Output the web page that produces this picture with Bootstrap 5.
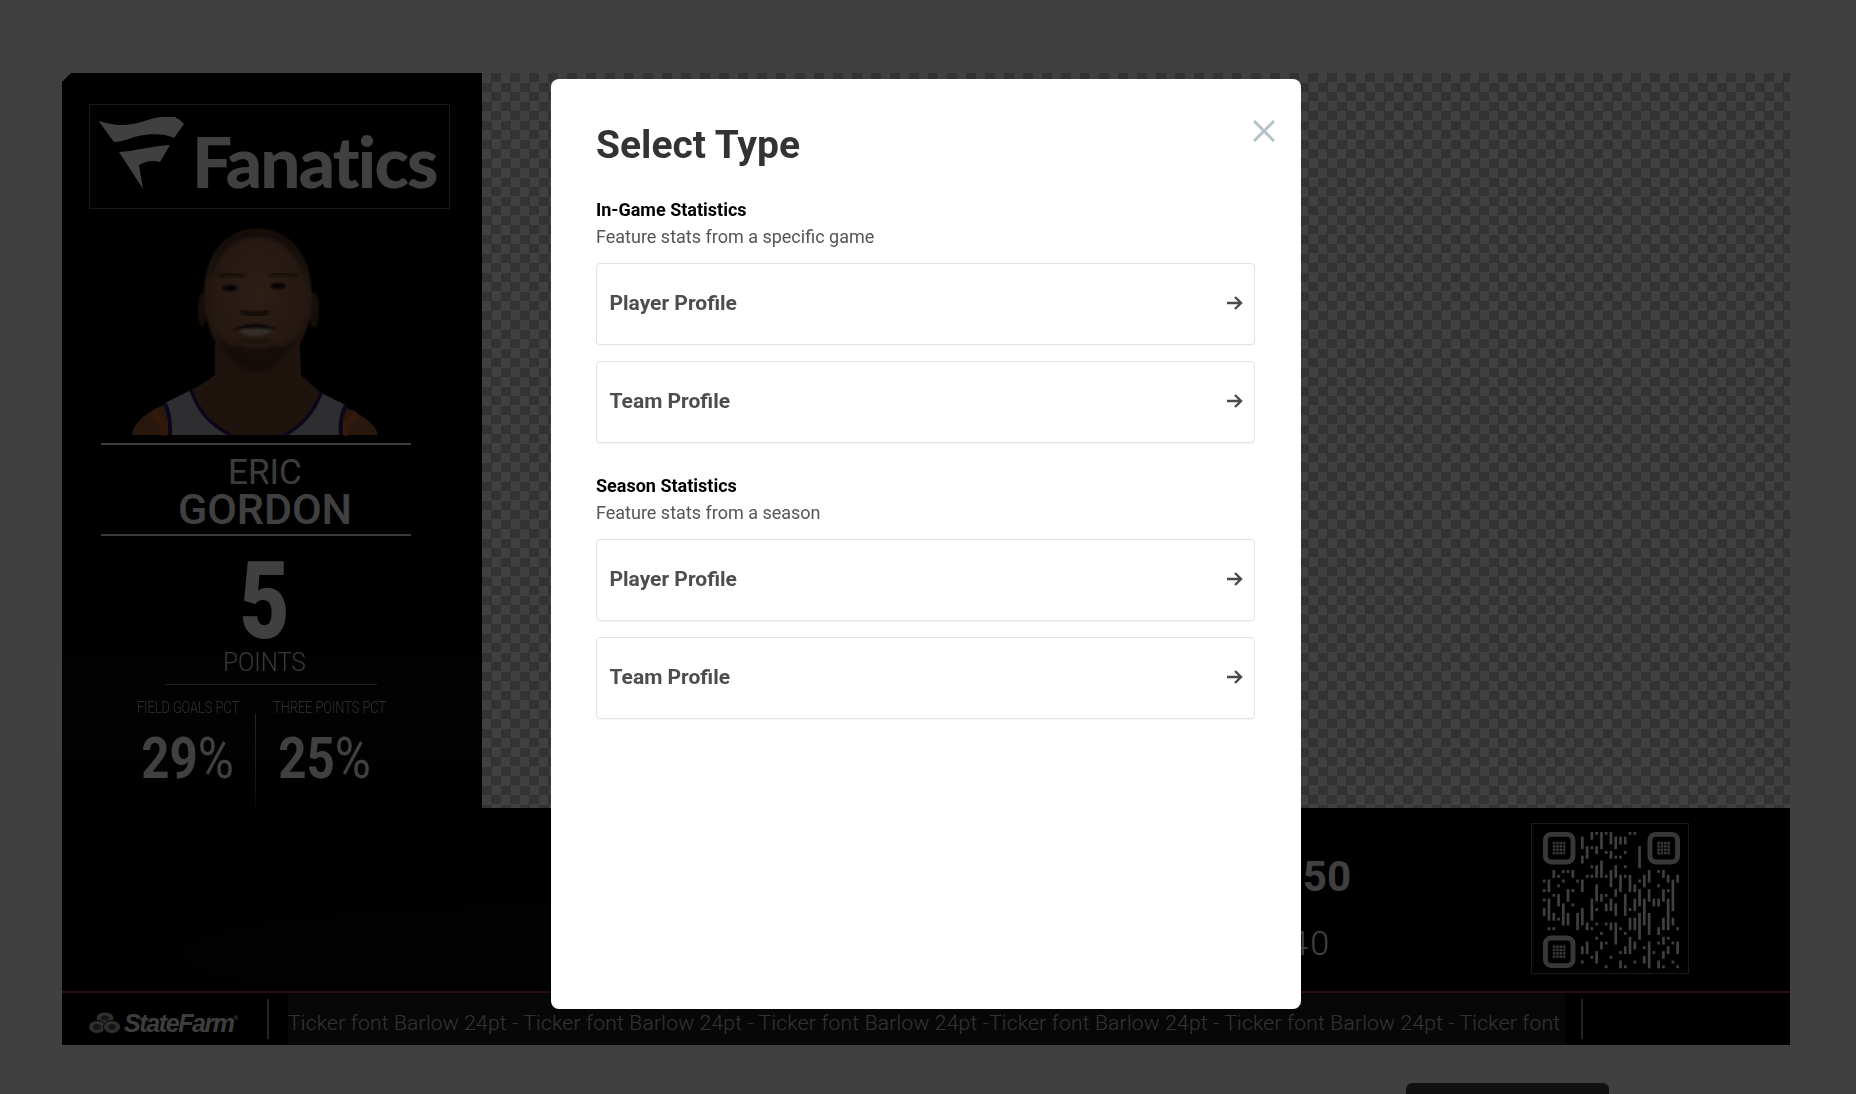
<!DOCTYPE html>
<html lang="en">
<head>
  <meta charset="UTF-8">
  <meta name="viewport" content="width=device-width, initial-scale=1">
  <title>Select Type</title>
  <link href="https://cdn.jsdelivr.net/npm/bootstrap@5.3.0/dist/css/bootstrap.min.css" rel="stylesheet">
  <style>
    body { font-family: Roboto, "Liberation Sans", sans-serif; background-color: #fff; overflow: hidden; height: 1094px; }
    .modal-backdrop.show { opacity: .75; }

    /* graphic behind the dialog */
    .graphic { width: 1728px; margin: 73px 0 0 62px; background: #000; box-shadow: 0 13px 0 rgba(255,255,255,.02); position: relative; }
    .graphic::before { content: ""; position: absolute; left: 0; top: 0; width: 9px; height: 9px; background: #fff; border-bottom-right-radius: 7px; clip-path: polygon(0 0, 100% 0, 0 100%); }
    .top-row { height: 735px; }
    .side { width: 420px; height: 735px; flex: none; background: linear-gradient(180deg, #000 70%, #0b0b0b 84%, #050505 100%); color: #fff; }
    .checker {
      background-color: #fff;
      background-image: conic-gradient(#ccc 25%, #fff 0 50%, #ccc 0 75%, #fff 0);
      background-size: 19px 19px;
    }
    .brand-box { width: 361px; height: 105px; margin: 31px 0 0 27px; border: 1px solid #666; padding: 0 13px 0 8px; }
    .brand-box svg { flex: none; }
    .brand-text { font-family: Lato, sans-serif; font-weight: 900; font-size: 71px; line-height: 1; color: #fff; letter-spacing: -1.8px; margin-top: 8px; }
    .photo { display: block; margin: 16px 0 0 63px; }
    .name-block { width: 310px; height: 93px; margin-left: 39px; border-top: 2px solid #eee; border-bottom: 2px solid #eee; padding-left: 18px; text-align: center; }
    .first-name { font-size: 35px; line-height: 34px; margin-top: 11px; font-weight: 400; color: #eee; }
    .last-name { font-size: 43px; line-height: 38px; font-weight: 500; color: #fff; }
    .points { width: 308px; margin-left: 39px; padding-left: 19px; text-align: center; }
    .points-value { display: block; font-size: 108px; line-height: 98px; font-weight: 900; transform: scaleX(.8); margin-top: 16px; }
    .points-label { display: block; font-size: 25px; line-height: 26px; font-weight: 300; transform: scaleX(.96); color: #ddd; }
    .points-rule { width: 212px; height: 1px; margin: 8px 0 0 103px; background: #777; }
    .pct-row { margin: 12px 0 0 58px; }
    .pct-first { width: 135px; }
    .pct-second { width: 137px; }
    .pct { text-align: center; }
    .pct-label { font-size: 17px; line-height: 20px; font-weight: 300; color: #bbb; transform: scaleX(.75); white-space: nowrap; }
    .pct-value { font-size: 58px; line-height: 60px; font-weight: 700; margin-top: 11px; transform: scaleX(.85); white-space: nowrap; }
    .pct-value span { font-weight: 400; }
    .pct-divider { width: 1px; height: 102px; margin: 17px 0 0 0; background: linear-gradient(180deg, #999, #555 70%, #000); }

    .lower { height: 183px; padding: 15px 0 0 0; background: radial-gradient(ellipse at 30% 80%, #0c0c0c, #000 60%); color: #fff; }
    .score { width: 1289px; padding-top: 29px; }
    .score-top { font-size: 42px; line-height: 50px; font-weight: 700; }
    .score-bottom { font-size: 34px; line-height: 40px; font-weight: 300; margin: 21px 20px 0 0; letter-spacing: 2px; }
    .qr { width: 158px; height: 151px; margin-left: 180px; border: 1px solid #666; }

    .ticker { height: 54px; border-top: 2px solid #b82a7e; background: #000; color: #fff; }
    .sponsor { width: 205px; flex: none; padding: 8px 0 0 26px; }
    .sponsor-name { font-family: "Liberation Sans", sans-serif; font-weight: 700; font-style: italic; font-size: 25px; letter-spacing: -1.4px; line-height: 1; margin-left: 3px; color: #f2f2f2; }
    .sponsor sup { font-size: 6px; top: -2em; font-style: normal; letter-spacing: 0; }
    .tick-sep { width: 2px; height: 40px; flex: none; background: #888; }
    .tick-text { width: 1277px; height: 52px; margin: 0 16px 0 19px; overflow: hidden; white-space: nowrap; font-size: 21px; font-weight: 300; color: #ccc; letter-spacing: .22px; background: #1e1e1e; flex: none; line-height: 60px; }

    .action-row { padding: 38px 247px 0 0; }
    .action-btn { width: 203px; height: 50px; background: #444; border: 0; }

    /* dialog */
    .select-dialog { max-width: 750px; margin: 79px 0 0 551px; }
    .select-dialog .modal-content { height: 930px; border: 0; border-radius: 8px; padding: 46px 46px 45px 45px; }
    .dialog-title { font-size: 39px; line-height: 41px; font-weight: 700; color: #333; margin: 0 0 32px; }
    .close-x { position: absolute; top: 39px; right: 26px; width: 22px; height: 22px; padding: 0; border: 0; background: none; display: block; }
    .group-title { font-size: 18px; line-height: 24px; font-weight: 700; color: #000; margin: 0 0 3px; }
    .group-sub { font-size: 18px; line-height: 24px; color: #555; margin: 0 0 14px; }
    .type-card { height: 82px; padding: 0 11.5px 0 12.5px; border: 1px solid #dde5e8; border-radius: 4px; margin-bottom: 16px; text-decoration: none; box-shadow: 0 1px 1px rgba(0,0,0,.03); }
    .type-card svg { margin-bottom: 2px; }
    .type-name { font-size: 21px; font-weight: 700; color: #4d4d4d; }
    .group + .group { margin-top: 15px; }
  </style>
</head>
<body>
  <div class="graphic">
    <div class="d-flex top-row">
      <div class="side">
        <div class="brand-box d-flex align-items-center justify-content-between">
          <svg width="94" height="80" viewBox="7 9 94 80" fill="#fff" aria-hidden="true">
            <path d="M7.5 13C20 17 35 19 50 14C62 10 75 7 84 9Q90 12 93 16L83 30C70 24 50 26 38 31C32 33 27 34 23 34Z"/>
            <path d="M28 44C45 43 60 38 79 37L69 54C62 52 55 53 48 57L52 81Z"/>
          </svg>
          <span class="brand-text">Fanatics</span>
        </div>
        <svg class="photo" width="260" height="218" viewBox="0 0 260 218" aria-hidden="true">
          <defs>
            <filter id="soft"><feGaussianBlur stdDeviation="2"/></filter>
            <filter id="faint"><feGaussianBlur stdDeviation=".8"/></filter>
            <radialGradient id="skin" cx=".5" cy=".45" r=".62">
              <stop offset="0" stop-color="#b07a58"/><stop offset=".7" stop-color="#94634a"/><stop offset="1" stop-color="#5a3826"/>
            </radialGradient>
          </defs>
          <path d="M7 210Q9 194 34 182L48 176L56 210Z" fill="#9a5c30"/>
          <path d="M253 210Q250 196 224 184L206 176L204 210Z" fill="#9a5c30"/>
          <path d="M28 186Q38 196 42 210" stroke="#c8662c" stroke-width="9" fill="none"/>
          <path d="M232 188Q222 198 218 210" stroke="#c8662c" stroke-width="9" fill="none"/>
          <path d="M40 178L66 165Q76 196 106 210L44 210Z" fill="#b6b4c0"/>
          <path d="M221 180L196 168Q186 196 160 210L216 210Z" fill="#b6b4c0"/>
          <path d="M90 118L175 118L176 150Q186 160 196 168Q186 196 160 210L106 210Q76 196 66 165Q80 158 90 150Z" fill="#7a4c35"/>
          <path d="M66 165Q76 196 106 210M196 168Q186 196 160 210" stroke="#2c1a66" stroke-width="3.5" fill="none"/>
          <path d="M40 178Q46 192 45 210M221 180Q214 194 216 210" stroke="#2c1a66" stroke-width="4" fill="none"/>
          <g filter="url(#faint)">
            <ellipse cx="77" cy="85" rx="4" ry="17" fill="#5f3b28"/>
            <ellipse cx="189" cy="85" rx="5" ry="18" fill="#5f3b28"/>
            <path d="M79 70C79 25 105 4 132 4C160 4 186 25 187 70C187 102 176 127 150 143C135 151 125 151 112 141C92 127 79 102 79 70Z" fill="url(#skin)"/>
          </g>
          <path d="M84 60C84 25 105 4 132 4C160 4 182 25 182 60C175 30 160 12 132 12C104 12 90 32 84 60Z" fill="#2a1a12" filter="url(#soft)" opacity=".7"/>
          <path d="M90 106C96 126 112 146 132 146C152 146 170 124 176 104C166 122 156 122 148 120C140 124 124 124 116 120C108 122 98 120 90 106Z" fill="#2c1b13" filter="url(#soft)" opacity=".6"/>
          <path d="M92 52Q106 46 120 52" stroke="#2c1a12" stroke-width="3" fill="none" filter="url(#soft)"/>
          <path d="M145 50Q160 46 172 52" stroke="#2c1a12" stroke-width="3" fill="none" filter="url(#soft)"/>
          <g filter="url(#faint)">
            <ellipse cx="105" cy="63" rx="8" ry="3" fill="#1a100c"/>
            <ellipse cx="153" cy="61" rx="8" ry="3" fill="#1a100c"/>
            <path d="M108 105Q130 92 153 105Q130 103 108 105Z" fill="#32201a"/>
            <path d="M114 105Q130 102 148 105Q140 111 130 111Q120 111 114 105Z" fill="#d0b8a8"/>
          </g>
          <path d="M116 86Q130 94 144 86" stroke="#3b2418" stroke-width="5" fill="none" filter="url(#soft)"/>
          <path d="M116 114Q130 122 146 113" stroke="#4b2e22" stroke-width="3" fill="none" filter="url(#soft)"/>
        </svg>
        <div class="name-block">
          <div class="first-name">ERIC</div>
          <div class="last-name">GORDON</div>
        </div>
        <div class="points">
          <span class="points-value">5</span>
          <span class="points-label">POINTS</span>
        </div>
        <div class="points-rule"></div>
        <div class="pct-row d-flex">
          <div class="pct pct-first">
            <div class="pct-label">FIELD GOALS PCT</div>
            <div class="pct-value">29<span>%</span></div>
          </div>
          <div class="pct-divider"></div>
          <div class="pct pct-second">
            <div class="pct-label">THREE POINTS PCT</div>
            <div class="pct-value">25<span>%</span></div>
          </div>
        </div>
      </div>
      <div class="checker flex-grow-1"></div>
    </div>
    <div class="lower d-flex">
      <div class="score d-flex flex-column align-items-end">
        <div class="score-top">50</div>
        <div class="score-bottom">40</div>
      </div>
      <svg class="qr" id="qr" viewBox="0 0 158 151" aria-hidden="true"></svg>
    </div>
    <div class="ticker d-flex align-items-center">
      <div class="sponsor d-flex align-items-center">
        <svg width="33" height="24" viewBox="0 0 33 24" aria-hidden="true">
          <g fill="#bbb" stroke="#000" stroke-width="1">
            <ellipse cx="17" cy="7" rx="9" ry="6"/>
            <ellipse cx="9" cy="16" rx="8.5" ry="6.5"/>
            <ellipse cx="24" cy="16" rx="8.5" ry="6.5"/>
          </g>
          <g fill="#555">
            <ellipse cx="17" cy="7" rx="4" ry="2.5"/>
            <ellipse cx="9" cy="16" rx="4" ry="3"/>
            <ellipse cx="24" cy="16" rx="4" ry="3"/>
          </g>
        </svg>
        <span class="sponsor-name">StateFarm<sup>®</sup></span>
      </div>
      <div class="tick-sep"></div>
      <div class="tick-text">Ticker font Barlow 24pt - Ticker font Barlow 24pt - Ticker font Barlow 24pt -Ticker font Barlow 24pt - Ticker font Barlow 24pt - Ticker font Barlow 24pt - Ticker font Barlow 24pt</div>
      <div class="tick-sep"></div>
    </div>
  </div>
  <div class="action-row d-flex justify-content-end">
    <button type="button" class="btn action-btn" aria-label="Continue"></button>
  </div>

  <div class="modal-backdrop show"></div>
  <div class="modal d-block" tabindex="-1">
    <div class="modal-dialog select-dialog">
      <div class="modal-content">
        <button type="button" class="close-x" aria-label="Close">
          <svg width="22" height="22" viewBox="0 0 22 22" stroke="#b3c2c6" stroke-width="3" aria-hidden="true"><path d="M1 1L21 21M21 1L1 21"/></svg>
        </button>
        <h2 class="dialog-title">Select Type</h2>
        <div class="group">
          <div class="group-title">In-Game Statistics</div>
          <div class="group-sub">Feature stats from a specific game</div>
          <a href="#" class="card type-card flex-row align-items-center justify-content-between">
            <span class="type-name">Player Profile</span>
            <svg width="16" height="14" viewBox="0 0 16 14" fill="none" stroke="#4a4a4a" stroke-width="2.4" aria-hidden="true"><path d="M0 7H14M8 1L14 7L8 13"/></svg>
          </a>
          <a href="#" class="card type-card flex-row align-items-center justify-content-between">
            <span class="type-name">Team Profile</span>
            <svg width="16" height="14" viewBox="0 0 16 14" fill="none" stroke="#4a4a4a" stroke-width="2.4" aria-hidden="true"><path d="M0 7H14M8 1L14 7L8 13"/></svg>
          </a>
        </div>
        <div class="group">
          <div class="group-title">Season Statistics</div>
          <div class="group-sub">Feature stats from a season</div>
          <a href="#" class="card type-card flex-row align-items-center justify-content-between">
            <span class="type-name">Player Profile</span>
            <svg width="16" height="14" viewBox="0 0 16 14" fill="none" stroke="#4a4a4a" stroke-width="2.4" aria-hidden="true"><path d="M0 7H14M8 1L14 7L8 13"/></svg>
          </a>
          <a href="#" class="card type-card flex-row align-items-center justify-content-between">
            <span class="type-name">Team Profile</span>
            <svg width="16" height="14" viewBox="0 0 16 14" fill="none" stroke="#4a4a4a" stroke-width="2.4" aria-hidden="true"><path d="M0 7H14M8 1L14 7L8 13"/></svg>
          </a>
        </div>
      </div>
    </div>
  </div>

  <script src="https://cdn.jsdelivr.net/npm/bootstrap@5.3.0/dist/js/bootstrap.bundle.min.js"></script>
  <script>
    // QR pattern: finder squares plus seeded pseudo-random vertical runs
    const qr = document.getElementById('qr');
    const N = 29, pitch = 4.83, ox = 11, oy = 8;
    let seed = 41;
    const rnd = () => (seed = (seed * 16807) % 2147483647) / 2147483647;
    let out = '';
    const inFinder = (c, r) => (c < 8 && r < 8) || (c > 20 && r < 8) || (c < 8 && r > 20);
    for (let c = 0; c < N; c++) {
      let r = 0;
      while (r < N) {
        if (inFinder(c, r) || rnd() < 0.58) { r++; continue; }
        let len = 1;
        while (rnd() < 0.55 && len < 7 && r + len < N && !inFinder(c, r + len)) len++;
        out += `<rect x="${(ox + c * pitch).toFixed(1)}" y="${(oy + r * pitch).toFixed(1)}" width="2.7" height="${(len * pitch - 1.8).toFixed(1)}" fill="#fff"/>`;
        r += len + 1;
      }
    }
    [[11, 8], [117, 8], [11, 113]].forEach(([x, y]) => {
      out += `<rect x="${x + 2.5}" y="${y + 2.5}" width="28" height="28" rx="6" fill="none" stroke="#ddd" stroke-width="5"/>`;
      for (let i = 0; i < 4; i++) for (let j = 0; j < 4; j++) {
        out += `<rect x="${x + 10 + i * 3.4}" y="${y + 10 + j * 3.4}" width="2.6" height="2.6" fill="#ddd"/>`;
      }
    });
    qr.innerHTML = out;
  </script>
</body>
</html>
